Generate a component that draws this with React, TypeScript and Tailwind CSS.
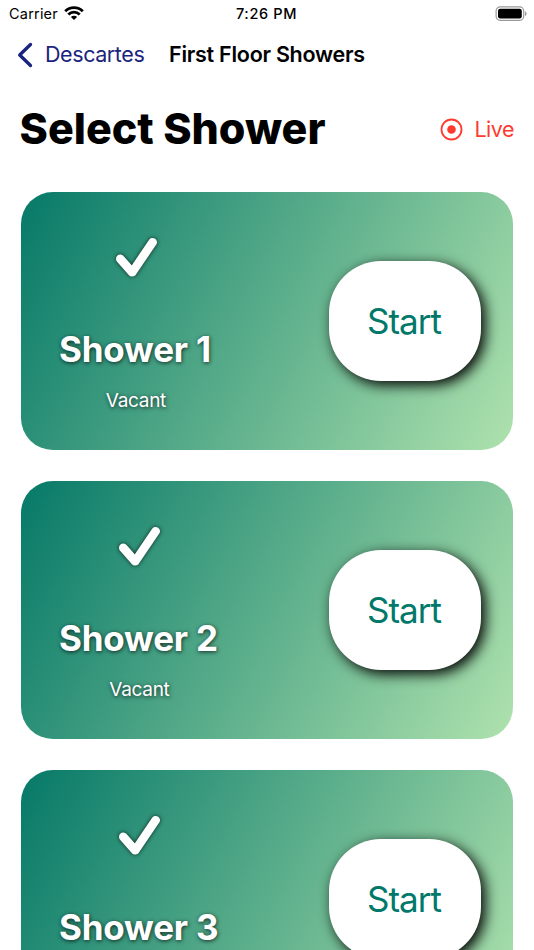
const showers = ["Shower 1", "Shower 2", "Shower 3"];

function StatusBar() {
  return (
    <div className="flex h-7 items-center justify-between pl-[9px] pr-[7px]">
      <div className="flex w-[120px] items-center gap-[6px]">
        <span className="text-[14.5px] leading-none tracking-[0.2px]">Carrier</span>
        <svg className="-mt-px" width="20" height="15" viewBox="0 0 20 15" fill="none" stroke="#000" strokeWidth="2.8">
          <path d="M1.2 5.2 A12.4 12.4 0 0 1 18.8 5.2" />
          <path d="M4.3 8.6 A8 8 0 0 1 15.7 8.6" />
          <path d="M10 14 L6.9 11 A4.4 4.4 0 0 1 13.1 11 Z" fill="#000" stroke="none" />
        </svg>
      </div>
      <span className="mr-[3px] text-[14.5px] font-medium leading-none tracking-[0.65px]">7:26 PM</span>
      <div className="flex w-[120px] justify-end">
        <svg className="-mt-px" width="32" height="15" viewBox="0 0 32 15">
          <rect x="1.1" y="0.9" width="27.6" height="13.4" rx="4" fill="none" stroke="#999" strokeWidth="1.2" />
          <rect x="3" y="2.8" width="23.8" height="9.6" rx="2.2" fill="#000" />
          <path d="M30 5.2 C32 6 32 9.2 30 10 Z" fill="#999" />
        </svg>
      </div>
    </div>
  );
}

function NavBar() {
  return (
    <div className="flex h-[54px] items-center pl-[17px] text-[21.5px] leading-none">
      <svg width="16" height="26" viewBox="0 0 16 26" fill="none" stroke="#1a237e" strokeWidth="3.3" strokeLinecap="round" strokeLinejoin="round">
        <path d="M13.5 2.5 L2.7 13 L13.5 23.5" />
      </svg>
      <span className="ml-3 w-[124px] whitespace-nowrap tracking-[-0.42px] text-[#1a237e]">Descartes</span>
      <span className="whitespace-nowrap font-semibold tracking-[-0.26px]">First Floor Showers</span>
    </div>
  );
}

function ShowerCard({ name }: { name: string }) {
  return (
    <div className="flex h-[258px] shrink-0 items-start justify-between rounded-[32px] bg-[linear-gradient(117.7deg,#067968,#afe2ae)] pl-[38px] pr-8">
      <div className="flex flex-col items-center text-white">
        <svg className="ml-[1.5px] mt-[44px] overflow-visible [filter:drop-shadow(0.5px_0.5px_2px_rgba(0,0,0,0.75))]" width="44" height="42" viewBox="0 0 44 42" fill="none" stroke="#fff" strokeWidth="8.6" strokeLinecap="round" strokeLinejoin="round">
          <path d="M6.3 22.8 L18.2 36.3 L38.7 6.2" />
        </svg>
        <span className="mt-[49px] whitespace-nowrap text-[35px] font-bold leading-[44px] tracking-[-0.2px] [text-shadow:0.5px_0.5px_4px_rgba(0,0,0,0.75)]">{name}</span>
        <span className="ml-[2px] mt-[18px] text-[19px] leading-6 tracking-[-0.3px] [text-shadow:0.5px_0.5px_4px_rgba(0,0,0,0.75)]">Vacant</span>
      </div>
      <button className="mt-[69px] flex h-[120px] w-[152px] items-center justify-center rounded-[52px] bg-white pr-[2px] text-[35px] tracking-[-1px] text-[#00796b] shadow-[4px_4px_14px_rgba(0,0,0,1)]">
        Start
      </button>
    </div>
  );
}

export default function App() {
  return (
    <div className="h-[950px] overflow-hidden bg-white font-['Inter',sans-serif] text-black">
      <StatusBar />
      <NavBar />
      <div className="flex h-[94px] items-center justify-between pl-[19.5px] pr-5">
        <h1 className="mb-[2px] whitespace-nowrap text-[43px] font-extrabold leading-none">Select Shower</h1>
        <div className="flex items-center gap-[11px] text-[21.5px] leading-none text-[#ff3b30]">
          <svg width="23" height="23" viewBox="0 0 23 23">
            <circle cx="11.5" cy="11.5" r="10" fill="none" stroke="#ff3b30" strokeWidth="1.8" />
            <circle cx="11.5" cy="11.5" r="4.3" fill="#ff3b30" />
          </svg>
          <span className="mt-px tracking-[-0.5px]">Live</span>
        </div>
      </div>
      <div className="flex flex-col gap-[31px] px-[21px] pt-4">
        {showers.map((name) => (
          <ShowerCard key={name} name={name} />
        ))}
      </div>
    </div>
  );
}
